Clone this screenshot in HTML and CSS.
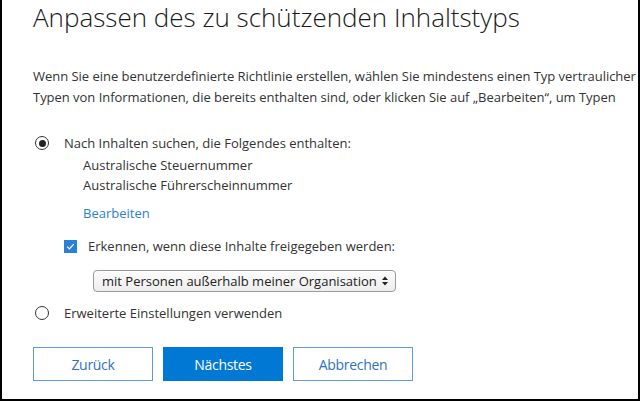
FILE: index.html
```html
<!DOCTYPE html>
<html lang="de">
<head>
<meta charset="utf-8">
<link rel="stylesheet" href="styles.css">
</head>
<body>
<div class="frame">
  <h1 class="title">Anpassen des zu schützenden Inhaltstyps</h1>
  <div class="intro">
    <p>Wenn Sie eine benutzerdefinierte Richtlinie erstellen, wählen Sie mindestens einen Typ vertraulicher</p>
    <p>Typen von Informationen, die bereits enthalten sind, oder klicken Sie auf „Bearbeiten“, um Typen</p>
  </div>
  <div class="option">
    <span class="radio checked"></span>
    <span class="label">Nach Inhalten suchen, die Folgendes enthalten:</span>
  </div>
  <div class="types">
    <div>Australische Steuernummer</div>
    <div>Australische Führerscheinnummer</div>
    <a class="edit">Bearbeiten</a>
  </div>
  <div class="detect">
    <span class="checkbox"><svg width="13" height="13" viewBox="0 0 13 13"><path d="M3.2 6.6 L5.4 8.8 L9.8 4.2" fill="none" stroke="#fff" stroke-width="1.2"/></svg></span>
    <span class="label">Erkennen, wenn diese Inhalte freigegeben werden:</span>
  </div>
  <div class="selectrow">
    <div class="select">
      <span>mit Personen außerhalb meiner Organisation</span>
      <svg width="8" height="12" viewBox="0 0 8 12"><path d="M4 1.5 L7 5 H1 Z M4 10.5 L7 7 H1 Z" fill="#222"/></svg>
    </div>
  </div>
  <div class="option second">
    <span class="radio"></span>
    <span class="label">Erweiterte Einstellungen verwenden</span>
  </div>
  <div class="buttons">
    <button class="btn">Zurück</button>
    <button class="btn primary">Nächstes</button>
    <button class="btn">Abbrechen</button>
  </div>
</div>
</body>
</html>
```
FILE: styles.css
```css
html, body {
  margin: 0;
  padding: 0;
  background: #fff;
}
body {
  width: 640px;
  height: 401px;
  overflow: hidden;
  font-family: "Open Sans", "Noto Sans", sans-serif;
  color: #333;
}
.frame {
  box-sizing: border-box;
  width: 640px;
  height: 401px;
  border: 2px solid #000;
  border-top: none;
  overflow: hidden;
  padding-left: 31px;
}
.title {
  margin: 0;
  font-weight: 300;
  font-size: 26px;
  line-height: 34px;
  color: #1a1a1a;
  white-space: nowrap;
}
.intro {
  margin-top: 32px;
  font-size: 13px;
  line-height: 21px;
  white-space: nowrap;
  letter-spacing: -0.03px;
}
.intro p {
  margin: 0;
}
.option {
  display: flex;
  align-items: center;
  margin-top: 25px;
  font-size: 13px;
  line-height: 20px;
}
.option .label {
  margin-left: 15px;
}
.option.second {
  margin-top: 11px;
}
.radio {
  box-sizing: border-box;
  width: 14px;
  height: 14px;
  margin-left: 2px;
  border: 1.5px solid #333;
  border-radius: 50%;
  display: flex;
  align-items: center;
  justify-content: center;
}
.radio.checked::after {
  content: "";
  width: 7px;
  height: 7px;
  border-radius: 50%;
  background: #222;
}
.types {
  margin-top: 2px;
  padding-left: 50px;
  font-size: 13px;
  line-height: 20px;
}
.edit {
  display: block;
  margin-top: 8px;
  color: #2a7fd4;
}
.detect {
  display: flex;
  align-items: center;
  margin-top: 13px;
  padding-left: 31px;
  font-size: 13px;
  line-height: 20px;
}
.checkbox {
  width: 13px;
  height: 13px;
  background: #2b7fd4;
  display: flex;
}
.detect .label {
  margin-left: 11px;
}
.selectrow {
  margin-top: 14px;
  padding-left: 60px;
}
.select {
  box-sizing: border-box;
  width: 303px;
  height: 22px;
  border: 1px solid #9a9a9a;
  border-radius: 4px;
  background: linear-gradient(#fcfcfc, #ededed);
  display: flex;
  align-items: center;
  justify-content: space-between;
  padding: 0 6px 0 8px;
  font-size: 13px;
  color: #222;
}
.buttons {
  display: flex;
  gap: 10px;
  margin-top: 24px;
}
.btn {
  box-sizing: border-box;
  width: 120px;
  height: 34px;
  border: 1px solid #5b9be0;
  background: #fff;
  color: #2f72c0;
  font-family: "Open Sans", "Noto Sans", sans-serif;
  font-size: 14px;
  letter-spacing: -0.3px;
  padding: 0;
}
.btn.primary {
  background: #0078d4;
  border-color: #0078d4;
  color: #fff;
}
```
